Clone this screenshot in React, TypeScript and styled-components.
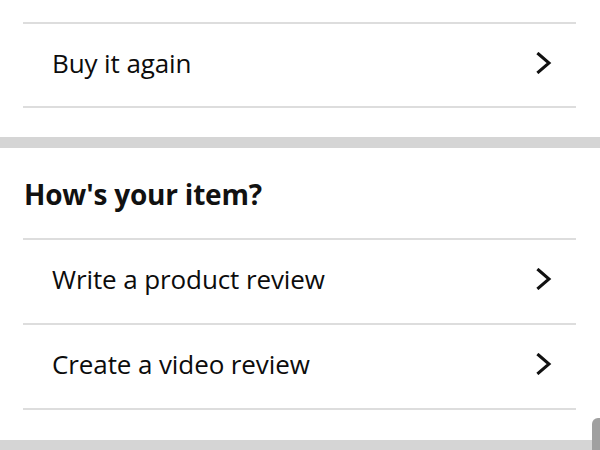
import React from "react";
import styled, { createGlobalStyle } from "styled-components";

const Global = createGlobalStyle`
  html, body { margin: 0; padding: 0; background: #ffffff; }
  body { font-family: "Open Sans", "Noto Sans", Arial, sans-serif; color: #111111; }
  #root { width: 600px; height: 450px; overflow: hidden; position: relative; }
`;

const Page = styled.div`
  display: flex;
  flex-direction: column;
  width: 600px;
  height: 450px;
  overflow: hidden;
`;

const Section = styled.section<{ $top: number; $bottom: number }>`
  display: flex;
  flex-direction: column;
  padding: ${(p) => p.$top}px 24px ${(p) => p.$bottom}px 23px;
  background: #ffffff;
`;

const Band = styled.div<{ $h: number }>`
  height: ${(p) => p.$h}px;
  flex: 0 0 auto;
  background: #d5d5d5;
`;

const Heading = styled.h2`
  margin: 0;
  height: 92px;
  display: flex;
  align-items: center;
  padding-left: 1px;
  padding-top: 1px;
  box-sizing: border-box;
  font-size: 28px;
  font-weight: 700;
  letter-spacing: -0.2px;
  color: #111111;
  border-bottom: 2px solid #dddddd;
`;

const Row = styled.div<{ $first?: boolean }>`
  height: ${(p) => (p.$first ? 86 : 85)}px;
  box-sizing: border-box;
  display: flex;
  align-items: center;
  justify-content: space-between;
  padding: 0 24px 5px 29px;
  border-top: ${(p) => (p.$first ? "2px solid #dddddd" : "none")};
  border-bottom: 2px solid #dddddd;
`;

const Label = styled.span`
  font-size: 26px;
  font-weight: 400;
  color: #0c0c0c;
  letter-spacing: -0.1px;
`;

const Chevron = styled.svg`
  width: 16px;
  height: 22px;
  flex: 0 0 auto;
`;

const Thumb = styled.div`
  position: absolute;
  right: -8px;
  top: 418px;
  width: 16px;
  height: 40px;
  border-radius: 6px;
  background: #a0a0a0;
`;

const Arrow = () => (
  <Chevron viewBox="0 0 16 22" fill="none">
    <path d="M2.5 2 L13 11 L2.5 20" stroke="#111111" strokeWidth="3" strokeLinecap="square" strokeLinejoin="miter" />
  </Chevron>
);

export default function App() {
  return (
    <Page>
      <Global />
      <Section $top={22} $bottom={29}>
        <Row $first>
          <Label>Buy it again</Label>
          <Arrow />
        </Row>
      </Section>
      <Band $h={11} />
      <Section $top={0} $bottom={30}>
        <Heading>How's your item?</Heading>
        <Row>
          <Label>Write a product review</Label>
          <Arrow />
        </Row>
        <Row>
          <Label>Create a video review</Label>
          <Arrow />
        </Row>
      </Section>
      <Band $h={20} />
      <Thumb />
    </Page>
  );
}
